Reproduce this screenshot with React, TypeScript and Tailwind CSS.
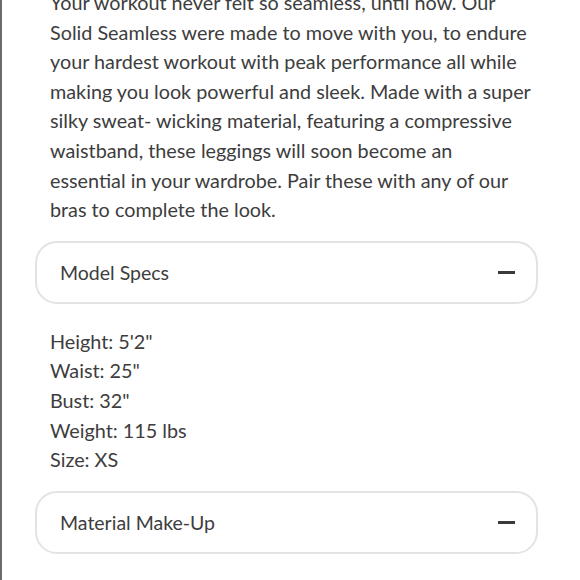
import { Minus } from "lucide-react";

const specs = ["Height: 5'2\"", 'Waist: 25"', 'Bust: 32"', "Weight: 115 lbs", "Size: XS"];

function AccordionHeader({ title }: { title: string }) {
  return (
    <div className="ml-[33px] mr-[42px] h-[63px] rounded-[22px] border-2 border-[#e3e3e3] bg-white flex items-center justify-between pl-[23px] pr-[21px]">
      <span className="text-[19.5px] text-[#3d3d3d]">{title}</span>
      <span className="block w-[17px] h-[3px] bg-[#3a3a3a]"></span>
    </div>
  );
}

export default function App() {
  return (
    <div className="w-[580px] h-[580px] overflow-hidden bg-white border-l-2 border-[#6b6b6b] font-['Lato',sans-serif]">
      <p className="-mt-[12px] pl-[48px] pr-[48px] text-[19.8px] leading-[29.6px] text-[#3d3d3d]">
        Your workout never felt so seamless, until now. Our Solid Seamless were made to move with you, to endure your
        hardest workout with peak performance all while making you look powerful and sleek. Made with a super silky
        sweat- wicking material, featuring a compressive waistband, these leggings will soon become an essential in your
        wardrobe. Pair these with any of our bras to complete the look.
      </p>
      <div className="mt-[16px]">
        <AccordionHeader title="Model Specs" />
      </div>
      <div className="mt-[23px] pl-[48px] text-[19.8px] leading-[29.6px] text-[#3d3d3d]">
        {specs.map((s) => (
          <div key={s}>{s}</div>
        ))}
      </div>
      <div className="mt-[16px]">
        <AccordionHeader title="Material Make-Up" />
      </div>
    </div>
  );
}
